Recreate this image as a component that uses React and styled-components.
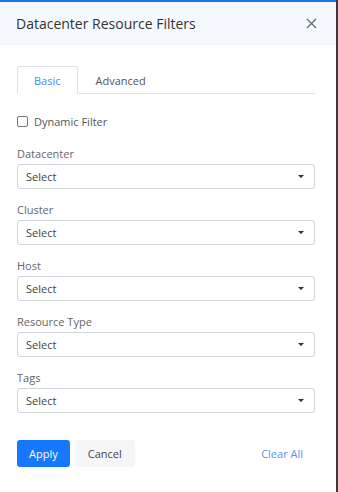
import styled, { createGlobalStyle } from 'styled-components';

const Global = createGlobalStyle`
  html, body {
    margin: 0;
    padding: 0;
    background: #ffffff;
  }
  body {
    font-family: 'Open Sans', 'Liberation Sans', sans-serif;
  }
`;

const Frame = styled.div`
  display: flex;
  width: 338px;
  height: 492px;
  overflow: hidden;
`;

const Panel = styled.div`
  flex: 1;
  display: flex;
  flex-direction: column;
  border-top: 2px solid #1a73e8;
  background: #ffffff;
`;

const Edge = styled.div`
  width: 2px;
  background: #3a3a3a;
`;

const Header = styled.div`
  display: flex;
  align-items: center;
  justify-content: space-between;
  height: 43px;
  padding: 0 19px 0 16px;
  background: #f5f9fe;
`;

const Title = styled.h1`
  margin: 0;
  font-size: 14px;
  font-weight: 400;
  color: #333333;
`;

const Close = styled.button`
  display: flex;
  padding: 0;
  border: none;
  background: none;
`;

const Body = styled.div`
  display: flex;
  flex-direction: column;
  padding: 20px 21px 0 17px;
`;

const Tabs = styled.div`
  display: flex;
  align-items: flex-end;
  border-bottom: 1px solid #dee2e6;
  height: 28px;
`;

const Tab = styled.div`
  display: flex;
  align-items: center;
  justify-content: center;
  height: 28px;
  padding: 0 ${p => (p.$active ? 16 : 17)}px;
  margin-bottom: -1px;
  box-sizing: border-box;
  font-size: 11px;
  color: ${p => (p.$active ? '#4a86f7' : '#555555')};
  background: ${p => (p.$active ? '#ffffff' : 'transparent')};
  border: 1px solid ${p => (p.$active ? '#dee2e6' : 'transparent')};
  border-bottom-color: ${p => (p.$active ? '#ffffff' : 'transparent')};
  border-radius: 3px 3px 0 0;
`;

const CheckRow = styled.label`
  display: flex;
  align-items: center;
  gap: 6px;
  margin-top: 20px;
  font-size: 11px;
  color: #555555;
`;

const Box = styled.span`
  width: 9px;
  height: 9px;
  border: 1px solid #777;
  border-radius: 2px;
`;

const Field = styled.div`
  display: flex;
  flex-direction: column;
  gap: 3px;
  margin-top: ${p => (p.$first ? '17px' : '13px')};
`;

const Label = styled.span`
  font-size: 11px;
  color: #666666;
`;

const Select = styled.div`
  display: flex;
  align-items: center;
  justify-content: space-between;
  height: 25px;
  padding: 0 10px 0 8px;
  border: 1px solid #cfd4da;
  border-radius: 3px;
  box-sizing: border-box;
  font-size: 11px;
  color: #444444;
`;

const Caret = styled.span`
  width: 0;
  height: 0;
  border-left: 3px solid transparent;
  border-right: 3px solid transparent;
  border-top: 3px solid #333;
`;

const Footer = styled.div`
  display: flex;
  align-items: center;
  gap: 5px;
  margin-top: 27px;
`;

const Button = styled.button`
  height: 27px;
  padding: 0 ${p => p.$pad || 12}px;
  border: none;
  border-radius: 3px;
  font-family: inherit;
  font-size: 11px;
  color: ${p => (p.$primary ? '#ffffff' : '#444444')};
  background: ${p => (p.$primary ? '#1677ff' : '#f5f6f8')};
`;

const Clear = styled.button`
  margin-left: auto;
  margin-right: 12px;
  padding: 0;
  border: none;
  background: none;
  font-family: inherit;
  font-size: 11px;
  color: #5b8ff5;
`;

const fields = ['Datacenter', 'Cluster', 'Host', 'Resource Type', 'Tags'];

export default function App() {
  return (
    <Frame>
      <Global />
      <Panel>
        <Header>
          <Title>Datacenter Resource Filters</Title>
          <Close aria-label="close">
            <svg width="11" height="11" viewBox="0 0 11 11">
              <path d="M1 1 L10 10 M10 1 L1 10" stroke="#5a6a7a" strokeWidth="1.2" />
            </svg>
          </Close>
        </Header>
        <Body>
          <Tabs>
            <Tab $active>Basic</Tab>
            <Tab>Advanced</Tab>
          </Tabs>
          <CheckRow>
            <Box />
            Dynamic Filter
          </CheckRow>
          {fields.map((f, i) => (
            <Field key={f} $first={i === 0}>
              <Label>{f}</Label>
              <Select>
                Select
                <Caret />
              </Select>
            </Field>
          ))}
          <Footer>
            <Button $primary $pad={12}>Apply</Button>
            <Button $pad={13}>Cancel</Button>
            <Clear>Clear All</Clear>
          </Footer>
        </Body>
      </Panel>
      <Edge />
    </Frame>
  );
}
